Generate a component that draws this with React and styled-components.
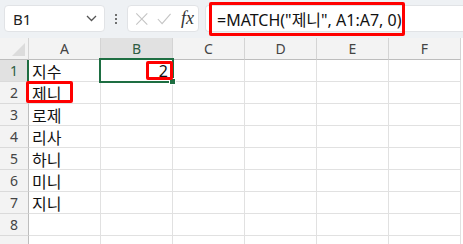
import React from "react";
import styled, { createGlobalStyle } from "styled-components";

const GlobalStyle = createGlobalStyle`
  html, body {
    margin: 0;
    padding: 0;
    background: #ffffff;
    overflow: hidden;
  }
  body {
    font-family: "Noto Sans", "Noto Sans CJK KR", sans-serif;
  }
`;

const columns = ["A", "B", "C", "D", "E", "F"];
const data = ["지수", "제니", "로제", "리사", "하니", "미니", "지니", "", ""];

export default function App() {
  return (
    <Page>
      <GlobalStyle />
      <Toolbar>
        <NameBox>
          <span>B1</span>
          <svg width="11" height="7" viewBox="0 0 11 7">
            <path d="M1 1 L5.5 5.5 L10 1" fill="none" stroke="#555" strokeWidth="1.3" />
          </svg>
        </NameBox>
        <Dots>
          <i />
          <i />
          <i />
        </Dots>
        <FxBox>
          <svg width="16" height="16" viewBox="0 0 16 16">
            <path d="M1.5 1.5 L14.5 14.5 M14.5 1.5 L1.5 14.5" stroke="#c4c4c4" strokeWidth="1.3" />
          </svg>
          <svg width="17" height="14" viewBox="0 0 17 14">
            <path d="M1 7 L6 12.5 L16 1" fill="none" stroke="#c4c4c4" strokeWidth="1.3" />
          </svg>
          <Fx>fx</Fx>
        </FxBox>
        <FormulaBox>
          <FormulaText>=MATCH("제니", A1:A7, 0)</FormulaText>
          <RedMark $left={3} $top={-4} $width={196} $height={34} />
        </FormulaBox>
      </Toolbar>
      <Sheet>
        <Corner />
        {columns.map((c) => (
          <ColHead key={c} $active={c === "B"}>
            {c}
          </ColHead>
        ))}
        {data.map((name, i) => (
          <React.Fragment key={i}>
            <RowHead $active={i === 0}>{i < 8 ? i + 1 : ""}</RowHead>
            <Cell>
              {name}
              {i === 1 && <RedMark $left={-3} $top={-1} $width={47} $height={22} />}
            </Cell>
            <Cell $right>
              {i === 0 && (
                <>
                  <span>2</span>
                  <Selection />
                  <RedMark $left={45} $top={1} $width={27} $height={19} />
                </>
              )}
            </Cell>
            <Cell />
            <Cell />
            <Cell />
            <Cell />
          </React.Fragment>
        ))}
      </Sheet>
    </Page>
  );
}

const Page = styled.div`
  width: 463px;
  height: 244px;
  overflow: hidden;
  background: #ffffff;
`;

const Toolbar = styled.div`
  height: 38px;
  background: #eef1f4;
  display: flex;
  align-items: center;
  padding: 0 0 1px 4px;
  box-sizing: border-box;
`;

const Box = styled.div`
  height: 27px;
  box-sizing: border-box;
  background: #ffffff;
  border: 1px solid #e1e3e6;
  border-radius: 4px;
  display: flex;
  align-items: center;
`;

const NameBox = styled(Box)`
  width: 101px;
  padding: 0 7px 0 8px;
  justify-content: space-between;
  font-size: 15px;
  color: #222;
`;

const Dots = styled.div`
  width: 22px;
  display: flex;
  flex-direction: column;
  align-items: center;
  gap: 2px;
  i {
    width: 2px;
    height: 2px;
    background: #444;
    border-radius: 1px;
  }
`;

const FxBox = styled(Box)`
  width: 72px;
  padding: 0 4px 0 7px;
  gap: 8px;
`;

const Fx = styled.span`
  font-family: "Liberation Serif", "DejaVu Serif", serif;
  font-style: italic;
  font-size: 18px;
  color: #333;
  margin-left: 2px;
`;

const FormulaBox = styled(Box)`
  position: relative;
  flex: 1;
  margin-left: 6px;
  border-right: none;
  border-radius: 4px 0 0 4px;
  padding-left: 11px;
`;

const FormulaText = styled.span`
  font-size: 16px;
  color: #111;
  font-family: "Noto Sans", "Noto Sans CJK KR", sans-serif;
  white-space: nowrap;
`;

const RedMark = styled.div`
  position: absolute;
  left: ${(p) => p.$left}px;
  top: ${(p) => p.$top}px;
  width: ${(p) => p.$width}px;
  height: ${(p) => p.$height}px;
  border: 3px solid #ff0000;
  border-radius: 2px;
  box-sizing: border-box;
  pointer-events: none;
  z-index: 3;
`;

const Sheet = styled.div`
  display: grid;
  grid-template-columns: 29px repeat(6, 72px);
  grid-auto-rows: 22px;
  grid-template-rows: 22px;
`;

const Corner = styled.div`
  background: #f3f3f3;
  border-right: 1px solid #d4d4d4;
  border-bottom: 1px solid #bdbdbd;
  position: relative;
  &::after {
    content: "";
    position: absolute;
    right: 3px;
    bottom: 3px;
    border-style: solid;
    border-width: 0 0 13px 13px;
    border-color: transparent transparent #dcdcdc transparent;
  }
`;

const ColHead = styled.div`
  background: ${(p) => (p.$active ? "#e1e1e1" : "#f3f3f3")};
  border-right: 1px solid #d4d4d4;
  border-bottom: 1px solid #bdbdbd;
  font-size: 14px;
  color: ${(p) => (p.$active ? "#2e5c42" : "#444")};
  display: flex;
  align-items: center;
  justify-content: center;
  box-sizing: border-box;
`;

const RowHead = styled.div`
  background: ${(p) => (p.$active ? "#e1e1e1" : "#f3f3f3")};
  border-right: ${(p) => (p.$active ? "2px solid #1e6e42" : "1px solid #bdbdbd")};
  border-bottom: 1px solid #dadada;
  font-size: 14px;
  color: ${(p) => (p.$active ? "#2e5c42" : "#444")};
  display: flex;
  align-items: center;
  justify-content: center;
  box-sizing: border-box;
  padding-left: ${(p) => (p.$active ? "1px" : "0")};
`;

const Cell = styled.div`
  position: relative;
  border-right: 1px solid #e1e1e1;
  border-bottom: 1px solid #e1e1e1;
  box-sizing: border-box;
  font-size: 16px;
  color: #111;
  font-family: "Noto Sans CJK KR", "Noto Sans", sans-serif;
  display: flex;
  align-items: center;
  justify-content: ${(p) => (p.$right ? "flex-end" : "flex-start")};
  padding: 0 4px 0 3px;
  white-space: nowrap;
  span {
    font-family: "Noto Sans", sans-serif;
  }
`;

const Selection = styled.div`
  position: absolute;
  left: -2px;
  top: -2px;
  right: -2px;
  bottom: -2px;
  border: 2px solid #1e6e42;
  pointer-events: none;
  z-index: 2;
  &::after {
    content: "";
    position: absolute;
    right: -4px;
    bottom: -4px;
    width: 5px;
    height: 5px;
    background: #1e6e42;
    border: 1px solid #ffffff;
  }
`;
